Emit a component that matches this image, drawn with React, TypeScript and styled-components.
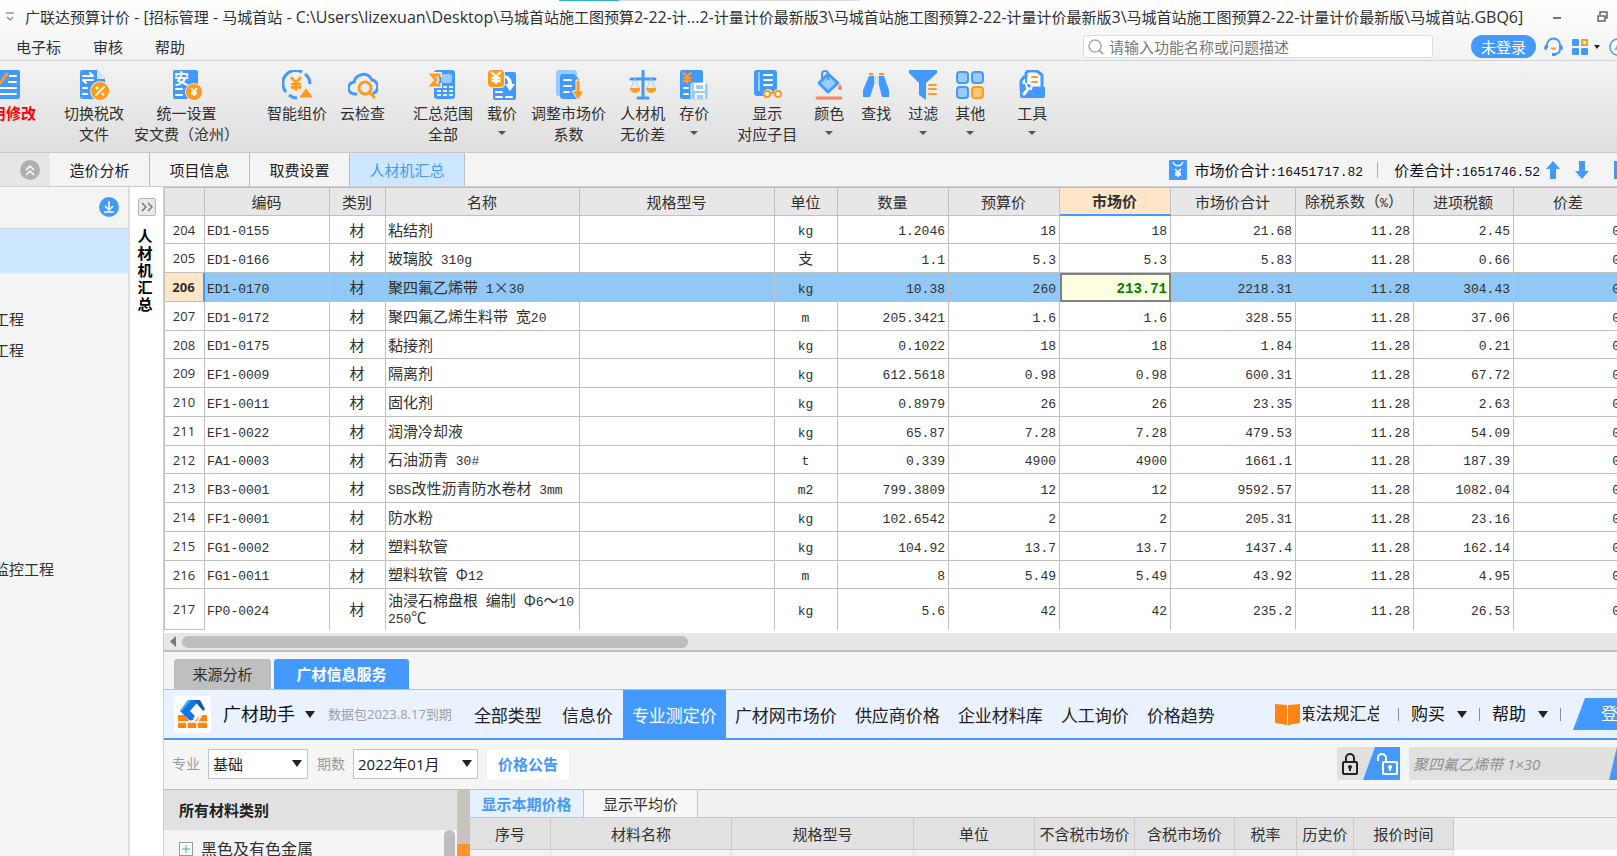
import React from "react";
import styled, { createGlobalStyle, css } from "styled-components";

const BLUE = "#4499ff";
const ORANGE = "#ff9a1a";
const LINE = "#c0c0c0";
const SANS = '"Open Sans", "Noto Sans CJK SC", sans-serif';
const MONO = '"Liberation Mono", "Noto Sans CJK SC", monospace';

const GlobalStyle = createGlobalStyle`
  * { box-sizing: border-box; }
  body { margin: 0; overflow: hidden; background: #f4f4f4; }
  button, input, select { font: inherit; color: inherit; margin: 0; }
  button { border: 0; padding: 0; background: none; white-space: nowrap; cursor: pointer; }
  a { color: inherit; text-decoration: none; white-space: nowrap; }
  svg { display: block; flex: none; }
`;

const Page = styled.div`
  display: flex;
  flex-direction: column;
  height: 100vh;
  overflow: hidden;
  font-family: ${SANS};
  font-size: 15px;
  line-height: 20px;
  color: #303030;
`;

/* ---------- window header ---------- */

const WindowHeader = styled.header`
  flex: none;
  height: 61px;
  border-bottom: 1px solid #d5d5d5;
  background: linear-gradient(#ffffff, #f2f2f2);
`;

const TopStrip = styled.div`
  display: flex;
  height: 1px;
  padding-left: 559px;
`;

const StripPart = styled.span<{ $width: number; $color: string }>`
  width: ${(p) => p.$width}px;
  background: ${(p) => p.$color};
`;

const TitleBar = styled.div`
  display: flex;
  align-items: center;
  height: 31px;
  padding: 0 9px 0 6px;
`;

const TitleText = styled.h1`
  flex: 1;
  margin: 0 0 0 11px;
  font-size: 15px;
  font-weight: 400;
  line-height: 20px;
  white-space: pre;
  overflow: hidden;
`;

const TitleLatin = styled.span`
  font-size: 16px;
`;

const WindowButtons = styled.div`
  display: flex;
  align-items: center;
  gap: 36px;
`;

const MenuBar = styled.div`
  display: flex;
  align-items: center;
  justify-content: space-between;
  height: 28px;
  padding: 1px 0 0 16px;
`;

const Menus = styled.nav`
  display: flex;
  gap: 32px;
`;

const Tools = styled.div`
  display: flex;
  align-items: center;
  overflow: hidden;
`;

const SearchBox = styled.label`
  display: flex;
  align-items: center;
  gap: 5px;
  width: 350px;
  height: 23px;
  margin-right: 38px;
  padding-left: 4px;
  border: 1px solid #dcdcdc;
  border-radius: 3px;
  background: #fff;
  input {
    flex: 1;
    min-width: 0;
    padding: 0;
    border: 0;
    outline: 0;
    background: none;
  }
  input::placeholder { color: #777; opacity: 1; }
`;

const LoginPill = styled.button`
  width: 65px;
  height: 23px;
  margin-right: 8px;
  border-radius: 12px;
  background: ${BLUE};
  color: #fff;
`;

const IconButton = styled.button<{ $gap?: number }>`
  display: flex;
  align-items: center;
  gap: 6px;
  margin-right: ${(p) => p.$gap ?? 0}px;
`;

/* ---------- ribbon ---------- */

const Ribbon = styled.div`
  display: flex;
  flex: none;
  gap: 28px;
  height: 92px;
  margin-left: -24px;
  padding-top: 9px;
  border-bottom: 1px solid #c9c9c9;
  background: linear-gradient(#f3f3f3, #dedede);
`;

const RibbonGroup = styled.div<{ $gap?: number }>`
  display: flex;
  align-items: flex-start;
  gap: ${(p) => p.$gap ?? 0}px;
  &:last-child { margin-left: 4px; }
`;

const RibbonButton = styled.button<{ $alert?: boolean }>`
  display: flex;
  flex-direction: column;
  align-items: center;
  line-height: 21px;
  svg { margin-bottom: 3px; }
  ${(p) => p.$alert && css`color: #ff0000; font-weight: 700;`}
`;

const DropMark = styled.span`
  margin-top: 7px;
  border: 4px solid transparent;
  border-top-color: #555;
  border-bottom: 0;
`;

/* ---------- module tabs ---------- */

const ModuleBar = styled.div`
  display: flex;
  flex: none;
  height: 33px;
  background: #f4f4f4;
`;

const CollapseCell = styled.div`
  display: flex;
  align-items: center;
  justify-content: flex-end;
  width: 50px;
  padding-right: 10px;
  background: #e6e6e6;
`;

const ModuleTab = styled.button<{ $active?: boolean }>`
  width: ${(p) => (p.$active ? 115 : 100)}px;
  border-right: 1px solid #bdbdbd;
  color: ${(p) => (p.$active ? BLUE : "#202020")};
  background: ${(p) => (p.$active ? "#cce7ff" : "#f4f4f4")};
`;

const Totals = styled.div`
  display: flex;
  align-items: center;
  margin-left: auto;
  color: #111;
`;

const TotalText = styled.span`
  margin-left: 8px;
  white-space: nowrap;
`;

const Half = styled.span`
  font-family: ${MONO};
  font-size: 13px;
  line-height: 13px;
`;

const TotalRule = styled.span`
  width: 1px;
  height: 16px;
  margin: 0 8px 0 14px;
  background: #9fb4cf;
`;

const Movers = styled.div`
  display: flex;
  gap: 15px;
  margin-left: 6px;
`;

const EdgeMark = styled.span`
  width: 3px;
  height: 18px;
  margin-left: 25px;
  background: ${BLUE};
`;

/* ---------- body ---------- */

const Body = styled.div`
  display: flex;
  flex: 1;
  min-height: 0;
  border-top: 1px solid #cfcfcf;
`;

const Sidebar = styled.aside`
  flex: none;
  width: 130px;
  border-right: 2px solid #dedede;
  overflow: hidden;
`;

const SidebarHead = styled.div`
  display: flex;
  align-items: center;
  justify-content: flex-end;
  height: 42px;
  padding: 0 9px 2px 0;
  border-bottom: 1px solid #d4d4d4;
`;

const SidebarSelected = styled.div`
  height: 44px;
  margin-bottom: 31px;
  background: #cce7ff;
`;

const TreeList = styled.ul`
  margin: 0 0 0 -6px;
  padding: 0;
  list-style: none;
  line-height: 31px;
  white-space: nowrap;
`;

const TreeLeaf = styled.li<{ $space?: number }>`
  margin-top: ${(p) => p.$space ?? 0}px;
`;

const Rail = styled.div`
  display: flex;
  flex: none;
  flex-direction: column;
  align-items: center;
  width: 33px;
  padding-top: 11px;
  background: #fff;
`;

const ExpandButton = styled.button`
  display: flex;
  align-items: center;
  justify-content: center;
  width: 18px;
  height: 18px;
  margin-bottom: 12px;
  border: 1px solid #b5b5b5;
  border-radius: 2px;
  background: #e9e9e9;
`;

const RailTitle = styled.h2`
  width: 15px;
  margin: 0 3px 0 0;
  font-size: 15px;
  line-height: 17px;
  font-weight: 700;
  color: #000;
  text-align: center;
  word-break: break-all;
`;

const Main = styled.main`
  display: flex;
  flex: 1;
  flex-direction: column;
  min-width: 0;
  border-left: 1px solid #cfcfcf;
  overflow: hidden;
`;

/* ---------- material grid ---------- */

const GridBox = styled.div`
  flex: none;
  padding-bottom: 3px;
  background: #fff;
  overflow: hidden;
`;

const Grid = styled.table`
  table-layout: fixed;
  width: 1460px;
  border-collapse: separate;
  border-spacing: 0;
  border-top: 1px solid ${LINE};
  font-family: "Noto Sans CJK SC", sans-serif;
  th, td {
    padding: 0 3px 0 2px;
    border-right: 1px solid ${LINE};
    border-bottom: 1px solid ${LINE};
    font-weight: 400;
    line-height: 16px;
    white-space: pre;
    overflow: hidden;
  }
  th:first-child { border-left: 1px solid ${LINE}; }
  thead th { height: 28px; background: #e7e7e7; }
  tbody tr { height: 29px; }
  tbody tr:nth-child(4n + 1) { height: 28px; }
  tbody tr:last-child { height: 41px; }
  tbody tr:last-child td { border-bottom-color: transparent; }
`;

const HeadCell = styled.th<{ $marked?: boolean }>`
  ${(p) => p.$marked && css`
    && {
      background: #ffe6c8;
      border-bottom: 2px solid ${BLUE};
      font-weight: 700;
    }
  `}
`;

const RowHead = styled.th<{ $marked?: boolean }>`
  && { font-family: ${SANS}; font-size: 13px; text-align: center; }
  ${(p) => p.$marked && css`
    && {
      background: #ffe6c8;
      border-right: 2px solid ${BLUE};
      font-weight: 700;
    }
  `}
`;

const Cell = styled.td<{ $align: "left" | "center" | "right"; $selected: boolean; $editing: boolean }>`
  text-align: ${(p) => p.$align};
  background: ${(p) => (p.$selected ? "#91c8f6" : "#fff")};
  ${(p) => p.$editing && css`
    && {
      padding-right: 2px;
      border: 2px solid #808080;
      background: #ffffe1;
      color: #008000;
      font-weight: 700;
    }
    ${Half} { font-size: 14px; }
  `}
`;

const ScrollRow = styled.div`
  display: flex;
  flex: none;
  align-items: center;
  gap: 6px;
  height: 19px;
  padding-left: 6px;
  border-bottom: 2px solid #bdbdbd;
  background: #e7e7e7;
`;

const ScrollThumb = styled.div`
  width: 35%;
  height: 12px;
  border-radius: 6px;
  background: #bebebe;
`;

/* ---------- service panel ---------- */

const PanelTabs = styled.div`
  display: flex;
  flex: none;
  gap: 3px;
  height: 38px;
  padding: 7px 0 0 10px;
  border-bottom: 1px solid ${LINE};
  background: #f5f5f5;
`;

const PanelTab = styled.button<{ $active?: boolean }>`
  width: ${(p) => (p.$active ? 135 : 97)}px;
  border-radius: 3px 3px 0 0;
  background: ${(p) => (p.$active ? BLUE : "#bfbfbf")};
  color: ${(p) => (p.$active ? "#fff" : "#303030")};
  font-weight: ${(p) => (p.$active ? 700 : 400)};
`;

const HelperBar = styled.div`
  display: flex;
  flex: none;
  align-items: center;
  height: 50px;
  padding-left: 10px;
  border-bottom: 2px solid ${BLUE};
  background: #eaf1ff;
  color: #222;
`;

const HelperLogo = styled.span`
  display: flex;
  align-items: center;
  justify-content: center;
  width: 37px;
  height: 37px;
  border-radius: 4px;
  background: #fff;
`;

const MenuButton = styled.button<{ $large?: boolean }>`
  display: flex;
  align-items: center;
  gap: ${(p) => (p.$large ? 10 : 12)}px;
  margin-left: ${(p) => (p.$large ? 12 : 0)}px;
  font-size: ${(p) => (p.$large ? 18 : 17)}px;
  color: #111;
`;

const Caret = styled.span`
  border: 5px solid transparent;
  border-top: 7px solid #222;
  border-bottom: 0;
`;

const Expiry = styled.span`
  margin: 0 12px 0 13px;
  font-size: 13px;
  color: #9d9fa5;
  white-space: nowrap;
`;

const PriceNav = styled.nav`
  display: flex;
  align-self: stretch;
`;

const PriceLink = styled.a<{ $active?: boolean }>`
  display: flex;
  align-items: center;
  padding: 4px 9px 0;
  font-size: 17px;
  color: ${(p) => (p.$active ? "#fff" : "#222")};
  background: ${(p) => (p.$active ? BLUE : "transparent")};
  &:nth-child(-n + 2) { padding: 4px 10px 0; }
`;

const HelperSide = styled.div`
  display: flex;
  align-items: center;
  margin-left: auto;
`;

const PolicyLink = styled.a`
  display: flex;
  align-items: center;
  gap: 3px;
  margin-right: 7px;
  font-size: 17px;
`;

const PolicyText = styled.span`
  display: flex;
  justify-content: center;
  width: 76px;
  overflow: hidden;
`;

const SideRule = styled.i`
  width: 1px;
  height: 13px;
  margin: 0 12px;
  background: #8d8d8d;
`;

const SlantButton = styled.button`
  width: 44px;
  height: 32px;
  overflow: hidden;
  padding-left: 28px;
  text-align: left;
  font-size: 17px;
  color: #fff;
  background: ${BLUE};
  clip-path: polygon(12px 0, 100% 0, 100% 100%, 0 100%);
`;

const FilterBar = styled.div`
  display: flex;
  flex: none;
  align-items: center;
  height: 50px;
  padding: 0 0 2px 8px;
  border-bottom: 1px solid ${LINE};
  background: #f5f5f5;
`;

const FilterLabel = styled.label`
  margin-right: 8px;
  font-size: 14px;
  color: #9a9a9a;
`;

const SelectBox = styled.span<{ $width: number }>`
  display: grid;
  align-items: center;
  width: ${(p) => p.$width}px;
  height: 30px;
  margin-right: 9px;
  border: 1px solid #c4c4c4;
  background: #fff;
  select, span { grid-area: 1 / 1; }
  select {
    height: 28px;
    padding: 0 0 0 4px;
    border: 0;
    outline: 0;
    appearance: none;
    background: none;
    color: #222;
  }
  span { justify-self: end; margin-right: 5px; pointer-events: none; }
`;

const NoticeButton = styled.button`
  width: 82px;
  height: 30px;
  background: #fff;
  color: ${BLUE};
  font-weight: 700;
`;

const LockSwitch = styled.div`
  display: flex;
  height: 33px;
  margin-left: auto;
  background: #e0e0e0;
`;

const LockButton = styled.button<{ $on?: boolean }>`
  display: flex;
  align-items: center;
  width: ${(p) => (p.$on ? 37 : 26)}px;
  padding-left: ${(p) => (p.$on ? 13 : 4)}px;
  ${(p) => p.$on && css`
    background: ${BLUE};
    clip-path: polygon(12px 0, 100% 0, 100% 100%, 0 100%);
  `}
`;

const MaterialSearch = styled.div`
  display: flex;
  width: 208px;
  height: 33px;
  margin-left: 9px;
  background: #e0e0e0;
  input {
    flex: 1;
    min-width: 0;
    padding: 0 4px;
    border: 0;
    outline: 0;
    background: none;
    font-style: italic;
    color: #8f8f8f;
  }
`;

const SearchGo = styled.button`
  width: 8px;
  background: ${BLUE};
  clip-path: polygon(100% 0, 100% 100%, 0 100%);
`;

const Lower = styled.div`
  display: flex;
  flex: 1;
  min-height: 0;
  overflow: hidden;
`;

const Categories = styled.section`
  display: flex;
  flex: none;
  flex-direction: column;
  width: 293px;
  background: #f5f5f5;
`;

const CategoryHead = styled.h3`
  flex: none;
  margin: 0;
  padding-left: 15px;
  font-size: 15px;
  line-height: 40px;
  color: #222;
  background: #e1e1e1;
`;

const CategoryBody = styled.div`
  display: flex;
  flex: 1;
  justify-content: space-between;
`;

const CategoryItem = styled.button`
  display: flex;
  align-items: center;
  gap: 8px;
  height: 38px;
  padding-left: 15px;
  font-size: 16px;
`;

const CategoryScroll = styled.div`
  width: 11px;
  margin-right: 2px;
  border-radius: 6px 6px 0 0;
  background: #bebebe;
`;

const Splitter = styled.div`
  flex: none;
  width: 13px;
  padding-top: 54px;
  background: #c6c3c0;
  &::after {
    content: "";
    display: block;
    height: 100%;
    background: #ff9130;
  }
`;

const Prices = styled.section`
  display: flex;
  flex: 1;
  flex-direction: column;
  min-width: 0;
  background: #f1f1f1;
`;

const PriceTabs = styled.div`
  display: flex;
  flex: none;
  height: 28px;
  border-bottom: 1px solid #cacaca;
`;

const PriceTab = styled.button<{ $active?: boolean }>`
  width: 114px;
  border-right: 1px solid #c8c8c8;
  color: ${(p) => (p.$active ? BLUE : "#303030")};
  font-weight: ${(p) => (p.$active ? 700 : 400)};
  background: ${(p) => (p.$active ? "#e6f1ff" : "#f7f7f7")};
`;

const PriceTable = styled.table`
  table-layout: fixed;
  width: 984px;
  border-collapse: separate;
  border-spacing: 0;
  th {
    height: 32px;
    padding: 0;
    border-right: 1px solid #cacaca;
    border-bottom: 1px solid #cacaca;
    background: #e1e1e1;
    font-weight: 400;
    white-space: nowrap;
  }
  td {
    height: 29px;
    border-right: 1px solid #e2e2e2;
    background: #f2f2f2;
  }
`;

const PriceArea = styled.div`
  flex: 1;
  background: linear-gradient(#efefef 32px, #fff 32px);
`;

/* ---------- icons ---------- */

type IconName =
  | "edit" | "switch" | "fee" | "smart" | "cloud" | "range" | "load" | "adjust"
  | "scale" | "store" | "show" | "color" | "find" | "filter" | "other" | "tool";

const PALE = "#99cbff";

const Lines = ({ d, color = "#fff", w = 2 }: { d: string; color?: string; w?: number }) => (
  <path d={d} stroke={color} strokeWidth={w} fill="none" strokeLinecap="round" strokeLinejoin="round" />
);

const YEN = "M-3 -4L0 -1L3 -4M0 -1V4M-3 0H3M-3 2H3";

const Yen = ({ x, y, s = 1, color = "#fff" }: { x: number; y: number; s?: number; color?: string }) => (
  <g transform={`translate(${x} ${y}) scale(${s})`}>
    <path d={YEN} stroke={color} strokeWidth={1.6} fill="none" />
  </g>
);

const ribbonArt: Record<IconName, React.ReactNode> = {
  edit: (
    <>
      <rect x="1" y="0" width="28" height="29" rx="2" fill={BLUE} />
      <Lines d="M19 6H25M18 12H25M6 18H25M6 24H25" />
      <Lines d="M5 9L9 13L16 4" color={ORANGE} w={3} />
    </>
  ),
  switch: (
    <>
      <path d="M3 0H18L26 8V29H3A2 2 0 0 1 1 27V2A2 2 0 0 1 3 0Z" fill={BLUE} />
      <path d="M18 0L27 9H18Z" fill="#cfe6ff" />
      <Lines d="M4 6H14L11 3M14 10H4L7 13" />
      <Lines d="M4 18H8M4 24H8" />
      <circle cx="21" cy="21" r="10" fill="#e9e9e9" />
      <circle cx="21" cy="21" r="9" fill={ORANGE} />
      <Lines d="M25 17L17 25" />
      <circle cx="18" cy="18" r="1.5" fill="#fff" />
      <circle cx="24" cy="24" r="1.5" fill="#fff" />
    </>
  ),
  fee: (
    <>
      <rect x="1" y="0" width="25" height="29" rx="2" fill={BLUE} />
      <text x="2" y="14" fontSize="15" fontWeight="700" fill="#fff">安</text>
      <Lines d="M4 19H10M4 25H10" />
      <circle cx="22" cy="22" r="9" fill="#e9e9e9" />
      <circle cx="22" cy="22" r="8" fill={ORANGE} />
      <Yen x={22} y={22} />
    </>
  ),
  smart: (
    <>
      <path d="M20 2A13 13 0 0 0 4 22" stroke={BLUE} strokeWidth="3" fill="none" />
      <path d="M23 4A13 13 0 0 1 28 14M7 25A13 13 0 0 0 15 28" stroke={BLUE} strokeWidth="3" fill="none" />
      <Yen x={14} y={14} s={1.7} color={ORANGE} />
      <path d="M24 19L30 27H18Z" fill={ORANGE} stroke={ORANGE} strokeWidth="1" strokeLinejoin="round" />
    </>
  ),
  cloud: (
    <>
      <path d="M8 24H7A6 6 0 0 1 6 12A9.500 9.500 0 0 1 24 10A7 7 0 0 1 26 23" stroke={BLUE} strokeWidth="3" fill="none" strokeLinecap="round" />
      <circle cx="17" cy="18" r="6" stroke={ORANGE} strokeWidth="3" fill="none" />
      <Lines d="M22 23L26 27" color={ORANGE} w={3} />
    </>
  ),
  range: (
    <>
      <rect x="6" y="0" width="21" height="29" rx="3" fill={BLUE} />
      <rect x="13" y="4" width="11" height="9" rx="3" fill={PALE} />
      <g fill="#dcecff">
        {[16, 20, 24].map((y) => [9, 15, 21].map((x) => <rect key={`${x}-${y}`} x={x} y={y} width="4" height="2" />))}
      </g>
      <path d="M11 7V5H4L8 10L4 15H11V13" stroke="#eee" strokeWidth="6" fill="none" />
      <path d="M11 7V5H4L8 10L4 15H11V13" stroke={ORANGE} strokeWidth="3" fill="none" />
    </>
  ),
  load: (
    <>
      <rect x="6" y="2" width="23" height="28" rx="2" fill={BLUE} />
      <Lines d="M9 22H15M9 27H15M19 27H25" />
      <path d="M17 5C23 6 25 10 25 14H28L23 21L18 14H21C21 10 20 8 17 8Z" fill="#fff" />
      <rect x="1" y="0" width="17" height="18" rx="4" fill="#e9e9e9" />
      <rect x="1" y="0" width="16" height="17" rx="4" fill={ORANGE} />
      <Yen x={9} y={8} s={1.5} />
    </>
  ),
  adjust: (
    <>
      <rect x="2" y="0" width="21" height="26" rx="3" fill={PALE} />
      <path d="M9 4H20L26 10V29H9A3 3 0 0 1 6 26V7A3 3 0 0 1 9 4Z" fill={BLUE} />
      <Lines d="M10 10H17M10 16H17M10 22H15" />
      <path d="M22 10H26V21H30L24 30L18 21H22Z" fill={ORANGE} stroke="#eee" strokeWidth="1" />
    </>
  ),
  scale: (
    <>
      <Lines d="M15 1V28M3 9H27M10 28H20" color={BLUE} w={3} />
      <Lines d="M7 9L3 18M7 9L11 18M23 9L19 18M23 9L27 18" color={PALE} w={1} />
      <path d="M2 18H12A5 5 0 0 1 2 18ZM18 18H28A5 5 0 0 1 18 18Z" fill={ORANGE} />
    </>
  ),
  store: (
    <>
      <rect x="1" y="0" width="23" height="29" rx="2" fill={BLUE} />
      <Yen x={8} y={8} s={1.4} color={ORANGE} />
      <Lines d="M5 18H9M5 24H9" />
      <rect x="12" y="13" width="17" height="17" rx="2" fill={PALE} stroke="#e9e9e9" />
      <path d="M16 14H25V20H16ZM17 29V24H25V29" fill="none" stroke="#fff" strokeWidth="2" />
    </>
  ),
  show: (
    <>
      <rect x="2" y="0" width="23" height="26" rx="3" fill={BLUE} />
      <rect x="6" y="2" width="2" height="19" fill={PALE} />
      <Lines d="M12 5H20M12 10H20M12 15H20" />
      <circle cx="16" cy="24" r="5" fill="#ebebeb" />
      <circle cx="26" cy="24" r="5" fill="#ebebeb" />
      <circle cx="15" cy="24" r="3" stroke={ORANGE} strokeWidth="2" fill="#fff" />
      <circle cx="26" cy="24" r="3" stroke={ORANGE} strokeWidth="2" fill="#fff" />
      <Lines d="M18 23H23" color={ORANGE} />
    </>
  ),
  color: (
    <>
      <path d="M14 4L24 13L14 22L5 13Z" fill={PALE} stroke={BLUE} strokeWidth="3" strokeLinejoin="round" />
      <path d="M8 9V4A3 3 0 0 1 14 4V10" stroke={BLUE} strokeWidth="2" fill="none" />
      <path d="M26 14C29 18 28 20 26 20S23 18 26 14Z" fill="#ff7d5c" />
      <Lines d="M3 28H27" color="#ff8360" w={3} />
    </>
  ),
  find: (
    <>
      <path d="M8 6H13V15L9 27H2V20ZM18 6H23L28 20V27H21L18 15Z" fill={BLUE} />
      <path d="M14 6V14M17 6V14" stroke={PALE} strokeWidth="1" />
      <path d="M8 4H12M18 4H23" stroke={ORANGE} strokeWidth="2" />
    </>
  ),
  filter: (
    <>
      <path d="M1 0H29V3L18 13V30L11 25V13L1 3Z" fill={BLUE} />
      <Lines d="M21 15H28M21 19H28M21 24H28" color={ORANGE} />
    </>
  ),
  other: (
    <g strokeWidth="2">
      <rect x="2" y="2" width="11" height="11" rx="3" fill={PALE} stroke={BLUE} />
      <rect x="17" y="2" width="11" height="11" rx="3" fill={PALE} stroke={BLUE} />
      <rect x="2" y="17" width="11" height="11" rx="3" fill={PALE} stroke={BLUE} />
      <rect x="17" y="17" width="11" height="11" rx="3" fill="#ffc77a" stroke={ORANGE} />
    </g>
  ),
  tool: (
    <>
      <path d="M4 20V11L7 7H9V4A3 3 0 0 1 12 1H20L25 5V18H4Z" fill="#fff" stroke={BLUE} strokeWidth="3" strokeLinejoin="round" />
      <path d="M9 7V13" stroke={BLUE} strokeWidth="2" />
      <Lines d="M15 7H20M15 12H20" color={ORANGE} />
      <path d="M3 14H12L16 17H28V26A2 2 0 0 1 26 28H5A2 2 0 0 1 3 26Z" fill={BLUE} />
      <Lines d="M7 24L11 19" w={3} />
      <path d="M9 14L10 18L14 19L15 15" stroke="#fff" strokeWidth="2" fill="none" />
    </>
  ),
};

const RibbonIcon = ({ name }: { name: IconName }) => (
  <svg width="30" height="30" viewBox="0 0 30 30" aria-hidden="true">{ribbonArt[name]}</svg>
);

const LogoArt = () => (
  <svg width="31" height="30" viewBox="0 0 31 30" aria-hidden="true">
    <path d="M1 16H8L12 22H18L23 16H30V29H1Z" fill="#ff8412" />
    <path d="M1 23H30M10 23V29M20 23V29M9 17L14 23M20 17H24L20 23" stroke="#fff" strokeWidth="1.500" fill="none" />
    <path d="M11 1H17L9 12L17 21H12L3 12Z" fill="#0d7ff0" />
    <path d="M11 1H17L9 12H3Z" fill="#37b4f5" />
    <path d="M14 1H23L20 4L13 12L18 17L14 22L5 12Z" fill="#1473e6" />
    <path d="M18 1H23L28 10L26 12L20 5Z" fill="#1758ad" />
    <path d="M20 5L14 12L18 16L25 11Z" fill="#fff" />
  </svg>
);

const Arrow = ({ down }: { down?: boolean }) => (
  <svg width="14" height="20" viewBox="0 0 14 20" aria-hidden="true">
    <path d={down ? "M4 1H10V11H14L7 19L0 11H4Z" : "M4 19H10V9H14L7 1L0 9H4Z"} fill={BLUE} />
  </svg>
);

/* ---------- data ---------- */

const windowTitle =
  "广联达预算计价 - [招标管理 - 马城首站 - C:\\Users\\lizexuan\\Desktop\\马城首站施工图预算2-22-计...2-计量计价最新版3\\马城首站施工图预算2-22-计量计价最新版3\\马城首站施工图预算2-22-计量计价最新版\\马城首站.GBQ6]";

type RibbonItem = { icon: IconName; lines: string[]; drop?: boolean; alert?: boolean };

const ribbon: { gap: number; items: RibbonItem[] }[] = [
  { gap: 0, items: [{ icon: "edit", lines: ["调用修改"], alert: true }] },
  {
    gap: 10,
    items: [
      { icon: "switch", lines: ["切换税改", "文件"] },
      { icon: "fee", lines: ["统一设置", "安文费（沧州）"] },
    ],
  },
  { gap: 13, items: [{ icon: "smart", lines: ["智能组价"] }, { icon: "cloud", lines: ["云检查"] }] },
  {
    gap: 14,
    items: [
      { icon: "range", lines: ["汇总范围", "全部"] },
      { icon: "load", lines: ["载价"], drop: true },
      { icon: "adjust", lines: ["调整市场价", "系数"] },
      { icon: "scale", lines: ["人材机", "无价差"] },
      { icon: "store", lines: ["存价"], drop: true },
    ],
  },
  {
    gap: 17,
    items: [
      { icon: "show", lines: ["显示", "对应子目"] },
      { icon: "color", lines: ["颜色"], drop: true },
      { icon: "find", lines: ["查找"] },
      { icon: "filter", lines: ["过滤"], drop: true },
      { icon: "other", lines: ["其他"], drop: true },
    ],
  },
  { gap: 0, items: [{ icon: "tool", lines: ["工具"], drop: true }] },
];

const columns = [
  { title: "", width: 41 },
  { title: "编码", width: 125 },
  { title: "类别", width: 56 },
  { title: "名称", width: 194 },
  { title: "规格型号", width: 195 },
  { title: "单位", width: 63 },
  { title: "数量", width: 111 },
  { title: "预算价", width: 111 },
  { title: "市场价", width: 111 },
  { title: "市场价合计", width: 125 },
  { title: "除税系数（%）", width: 118 },
  { title: "进项税额", width: 100 },
  { title: "价差", width: 110 },
];

const rows: string[][] = [
  ["204", "ED1-0155", "粘结剂", "kg", "1.2046", "18", "18", "21.68", "2.45"],
  ["205", "ED1-0166", "玻璃胶 310g", "支", "1.1", "5.3", "5.3", "5.83", "0.66"],
  ["206", "ED1-0170", "聚四氟乙烯带 1×30", "kg", "10.38", "260", "213.71", "2218.31", "304.43"],
  ["207", "ED1-0172", "聚四氟乙烯生料带 宽20", "m", "205.3421", "1.6", "1.6", "328.55", "37.06"],
  ["208", "ED1-0175", "黏接剂", "kg", "0.1022", "18", "18", "1.84", "0.21"],
  ["209", "EF1-0009", "隔离剂", "kg", "612.5618", "0.98", "0.98", "600.31", "67.72"],
  ["210", "EF1-0011", "固化剂", "kg", "0.8979", "26", "26", "23.35", "2.63"],
  ["211", "EF1-0022", "润滑冷却液", "kg", "65.87", "7.28", "7.28", "479.53", "54.09"],
  ["212", "FA1-0003", "石油沥青 30#", "t", "0.339", "4900", "4900", "1661.1", "187.39"],
  ["213", "FB3-0001", "SBS改性沥青防水卷材 3mm", "m2", "799.3809", "12", "12", "9592.57", "1082.04"],
  ["214", "FF1-0001", "防水粉", "kg", "102.6542", "2", "2", "205.31", "23.16"],
  ["215", "FG1-0002", "塑料软管", "kg", "104.92", "13.7", "13.7", "1437.4", "162.14"],
  ["216", "FG1-0011", "塑料软管 Φ12", "m", "8", "5.49", "5.49", "43.92", "4.95"],
  ["217", "FP0-0024", "油浸石棉盘根 编制 Φ6～10\n250℃", "kg", "5.6", "42", "42", "235.2", "26.53"],
];

const priceColumns = [
  { title: "序号", width: 81 },
  { title: "材料名称", width: 181 },
  { title: "规格型号", width: 182 },
  { title: "单位", width: 121 },
  { title: "不含税市场价", width: 100 },
  { title: "含税市场价", width: 100 },
  { title: "税率", width: 62 },
  { title: "历史价", width: 57 },
  { title: "报价时间", width: 100 },
];

const priceLinks = ["全部类型", "信息价", "专业测定价", "广材网市场价", "供应商价格", "企业材料库", "人工询价", "价格趋势"];

/* Wraps each half-width run in its own element; full-width characters keep the surrounding face. */
const MixedText = ({ text, as: Run }: { text: string; as: React.ElementType }) => (
  <>
    {text.split(/([ -~]+)/).map((part, i) => (/^[ -~]+$/.test(part) ? <Run key={i}>{part}</Run> : part))}
  </>
);

const GridRow = ({ row }: { row: string[] }) => {
  const [no, code, name, unit, qty, budget, market, total, tax] = row;
  const selected = no === "206";
  const cells: [string, "left" | "center" | "right"][] = [
    [code, "left"], ["材", "center"], [name, "left"], ["", "left"], [unit, "center"], [qty, "right"],
    [budget, "right"], [market, "right"], [total, "right"], ["11.28", "right"], [tax, "right"], ["0", "right"],
  ];
  return (
    <tr>
      <RowHead scope="row" $marked={selected}>{no}</RowHead>
      {cells.map(([text, align], i) => (
        <Cell key={i} $align={align} $selected={selected} $editing={selected && i === 7}>
          <MixedText text={text} as={Half} />
        </Cell>
      ))}
    </tr>
  );
};

export default function App() {
  return (
    <Page>
      <GlobalStyle />
      <WindowHeader>
        <TopStrip>
          <StripPart $width={60} $color="#2cb5c9" />
          <StripPart $width={241} $color="#dcdcdc" />
        </TopStrip>
        <TitleBar>
          <svg width="8" height="10" viewBox="0 0 8 10" aria-hidden="true">
            <path d="M0 1H8M1 5L4 8L7 5" stroke="#999" strokeWidth="1.500" fill="none" />
          </svg>
          <TitleText><MixedText text={windowTitle} as={TitleLatin} /></TitleText>
          <WindowButtons>
            <IconButton aria-label="最小化">
              <svg width="8" height="12" viewBox="0 0 8 12"><path d="M0 7H8" stroke="#777" strokeWidth="2" /></svg>
            </IconButton>
            <IconButton aria-label="还原">
              <svg width="11" height="12" viewBox="0 0 11 12">
                <path d="M1 5H8V10H1ZM3 4V1H10V7H8" stroke="#666" strokeWidth="1.500" fill="none" />
              </svg>
            </IconButton>
          </WindowButtons>
        </TitleBar>
        <MenuBar>
          <Menus>
            <a href="#bid">电子标</a>
            <a href="#review">审核</a>
            <a href="#help">帮助</a>
          </Menus>
          <Tools>
            <SearchBox>
              <svg width="16" height="16" viewBox="0 0 16 16" aria-hidden="true">
                <circle cx="7" cy="7" r="6" stroke="#aaa" strokeWidth="1.500" fill="none" />
                <path d="M11 11L15 15" stroke="#aaa" strokeWidth="2" />
              </svg>
              <input aria-label="搜索" placeholder="请输入功能名称或问题描述" />
            </SearchBox>
            <LoginPill>未登录</LoginPill>
            <IconButton aria-label="客服" $gap={9}>
              <svg width="19" height="20" viewBox="0 0 19 20">
                <path d="M3 11V8A6.500 6.500 0 0 1 16 8V12C16 16 13 17 10 17" stroke={BLUE} strokeWidth="2" fill="none" />
                <path d="M1 8H3V13H1L0 11ZM16 8H18L19 11L18 13H16ZM8 16H12V19H8Z" fill={BLUE} />
                <path d="M7 11H12A3 3 0 0 1 7 11Z" fill={ORANGE} stroke={ORANGE} />
              </svg>
            </IconButton>
            <IconButton aria-label="应用" $gap={9}>
              <svg width="16" height="16" viewBox="0 0 16 16">
                <rect x="0" y="0" width="7" height="7" rx="1" fill={BLUE} />
                <rect x="10" y="1" width="5" height="5" fill="#fff" stroke={ORANGE} strokeWidth="2" />
                <rect x="0" y="9" width="7" height="7" rx="1" fill={BLUE} />
                <rect x="9" y="9" width="7" height="7" rx="1" fill={BLUE} />
              </svg>
              <svg width="6" height="4" viewBox="0 0 6 4"><path d="M0 0H6L3 4Z" fill="#222" /></svg>
            </IconButton>
            <IconButton aria-label="账户">
              <svg width="8" height="18" viewBox="0 0 8 18">
                <circle cx="9" cy="9" r="8" stroke={BLUE} strokeWidth="1.500" fill="#fff" />
                <path d="M8 7V12H5Z" fill={ORANGE} />
              </svg>
            </IconButton>
          </Tools>
        </MenuBar>
      </WindowHeader>

      <Ribbon>
        {ribbon.map((group, g) => (
          <RibbonGroup key={g} $gap={group.gap}>
            {group.items.map((item) => (
              <RibbonButton key={item.icon} $alert={item.alert}>
                <RibbonIcon name={item.icon} />
                {item.lines.map((line) => <span key={line}>{line}</span>)}
                {item.drop && <DropMark />}
              </RibbonButton>
            ))}
          </RibbonGroup>
        ))}
      </Ribbon>

      <ModuleBar>
        <CollapseCell>
          <IconButton aria-label="收起">
            <svg width="20" height="20" viewBox="0 0 20 20">
              <circle cx="10" cy="10" r="10" fill="#b0b0b0" />
              <path d="M6 10L10 6L14 10M6 15L10 11L14 15" stroke="#fff" strokeWidth="1.500" fill="none" />
            </svg>
          </IconButton>
        </CollapseCell>
        <ModuleTab>造价分析</ModuleTab>
        <ModuleTab>项目信息</ModuleTab>
        <ModuleTab>取费设置</ModuleTab>
        <ModuleTab $active>人材机汇总</ModuleTab>
        <Totals>
          <svg width="18" height="20" viewBox="0 0 18 20" aria-hidden="true">
            <rect width="18" height="20" rx="1" fill={BLUE} />
            <path d="M4 2C6 7 12 7 14 2" stroke="#fff" strokeWidth="1.500" fill="none" />
            <Yen x={9} y={13} />
          </svg>
          <TotalText>市场价合计<Half>:16451717.82</Half></TotalText>
          <TotalRule />
          <TotalText>价差合计<Half>:1651746.52</Half></TotalText>
          <Movers>
            <IconButton aria-label="上移"><Arrow /></IconButton>
            <IconButton aria-label="下移"><Arrow down /></IconButton>
          </Movers>
          <EdgeMark />
        </Totals>
      </ModuleBar>

      <Body>
        <Sidebar>
          <SidebarHead>
            <IconButton aria-label="下载">
              <svg width="20" height="20" viewBox="0 0 20 20">
                <circle cx="10" cy="10" r="10" fill={BLUE} />
                <path d="M10 4V12M6 9L10 13L14 9M5 15H15" stroke="#fff" strokeWidth="1.500" fill="none" />
              </svg>
            </IconButton>
          </SidebarHead>
          <SidebarSelected />
          <TreeList>
            <TreeLeaf>工程</TreeLeaf>
            <TreeLeaf>工程</TreeLeaf>
            <TreeLeaf $space={188}>监控工程</TreeLeaf>
          </TreeList>
        </Sidebar>
        <Rail>
          <ExpandButton aria-label="展开">
            <svg width="12" height="10" viewBox="0 0 12 10">
              <path d="M1 1L5 5L1 9M7 1L11 5L7 9" stroke="#777" strokeWidth="1.500" fill="none" />
            </svg>
          </ExpandButton>
          <RailTitle>人材机汇总</RailTitle>
        </Rail>

        <Main>
          <GridBox>
            <Grid>
              <colgroup>{columns.map((c) => <col key={c.title} width={c.width} />)}</colgroup>
              <thead>
                <tr>
                  {columns.map((c) => (
                    <HeadCell key={c.title} scope="col" $marked={c.title === "市场价"}>
                      <MixedText text={c.title} as={Half} />
                    </HeadCell>
                  ))}
                </tr>
              </thead>
              <tbody>{rows.map((r) => <GridRow key={r[0]} row={r} />)}</tbody>
            </Grid>
          </GridBox>
          <ScrollRow>
            <svg width="6" height="11" viewBox="0 0 6 11" aria-hidden="true"><path d="M6 0V11L0 5.500Z" fill="#7a7a7a" /></svg>
            <ScrollThumb />
          </ScrollRow>

          <PanelTabs>
            <PanelTab>来源分析</PanelTab>
            <PanelTab $active>广材信息服务</PanelTab>
          </PanelTabs>
          <HelperBar>
            <HelperLogo><LogoArt /></HelperLogo>
            <MenuButton $large>广材助手<Caret /></MenuButton>
            <Expiry>数据包2023.8.17到期</Expiry>
            <PriceNav>
              {priceLinks.map((t) => (
                <PriceLink key={t} href="#prices" $active={t === "专业测定价"}>{t}</PriceLink>
              ))}
            </PriceNav>
            <HelperSide>
              <PolicyLink href="#policy">
                <svg width="25" height="22" viewBox="0 0 25 22" aria-hidden="true">
                  <path d="M0 1L12 2V22L0 20ZM13 2L25 1V20L13 22Z" fill="#ff8412" />
                </svg>
                <PolicyText>策法规汇总</PolicyText>
              </PolicyLink>
              <SideRule />
              <MenuButton>购买<Caret /></MenuButton>
              <SideRule />
              <MenuButton>帮助<Caret /></MenuButton>
              <SideRule />
              <SlantButton>登录</SlantButton>
            </HelperSide>
          </HelperBar>

          <FilterBar>
            <FilterLabel htmlFor="major">专业</FilterLabel>
            <SelectBox $width={100}>
              <select id="major"><option>基础</option></select>
              <Caret />
            </SelectBox>
            <FilterLabel htmlFor="period">期数</FilterLabel>
            <SelectBox $width={125}>
              <select id="period"><option>2022年01月</option></select>
              <Caret />
            </SelectBox>
            <NoticeButton>价格公告</NoticeButton>
            <LockSwitch>
              <LockButton aria-label="锁定">
                <svg width="18" height="24" viewBox="0 0 18 24">
                  <path d="M5 10V6A4 4 0 0 1 13 6V10" stroke="#222" strokeWidth="2" fill="none" />
                  <rect x="2" y="10" width="14" height="12" rx="1" stroke="#222" strokeWidth="2" fill="none" />
                  <path d="M9 14V19" stroke="#222" strokeWidth="2" />
                  <circle cx="9" cy="15" r="2" fill="#222" />
                </svg>
              </LockButton>
              <LockButton $on aria-label="解锁">
                <svg width="23" height="24" viewBox="0 0 23 24">
                  <path d="M2 9V6A4 4 0 0 1 10 6V10" stroke="#fff" strokeWidth="2" fill="none" />
                  <rect x="7" y="10" width="14" height="12" rx="1" stroke="#fff" strokeWidth="2" fill="none" />
                  <path d="M14 14V19" stroke="#fff" strokeWidth="2" />
                  <circle cx="14" cy="15" r="2" fill="#fff" />
                </svg>
              </LockButton>
            </LockSwitch>
            <MaterialSearch>
              <input aria-label="材料名称" defaultValue="聚四氟乙烯带 1×30" />
              <SearchGo aria-label="搜索材料" />
            </MaterialSearch>
          </FilterBar>

          <Lower>
            <Categories>
              <CategoryHead>所有材料类别</CategoryHead>
              <CategoryBody>
                <CategoryItem>
                  <svg width="14" height="14" viewBox="0 0 14 14" aria-hidden="true">
                    <rect x="0.500" y="0.500" width="13" height="13" fill="#fff" stroke="#999" />
                    <path d="M3 7H11M7 3V11" stroke="#3aa6c9" />
                  </svg>
                  黑色及有色金属
                </CategoryItem>
                <CategoryScroll />
              </CategoryBody>
            </Categories>
            <Splitter />
            <Prices>
              <PriceTabs>
                <PriceTab $active>显示本期价格</PriceTab>
                <PriceTab>显示平均价</PriceTab>
              </PriceTabs>
              <PriceArea>
                <PriceTable>
                  <colgroup>{priceColumns.map((c) => <col key={c.title} width={c.width} />)}</colgroup>
                  <thead>
                    <tr>{priceColumns.map((c) => <th key={c.title} scope="col">{c.title}</th>)}</tr>
                  </thead>
                  <tbody>
                    <tr>{priceColumns.map((c) => <td key={c.title} />)}</tr>
                  </tbody>
                </PriceTable>
              </PriceArea>
            </Prices>
          </Lower>
        </Main>
      </Body>
    </Page>
  );
}
